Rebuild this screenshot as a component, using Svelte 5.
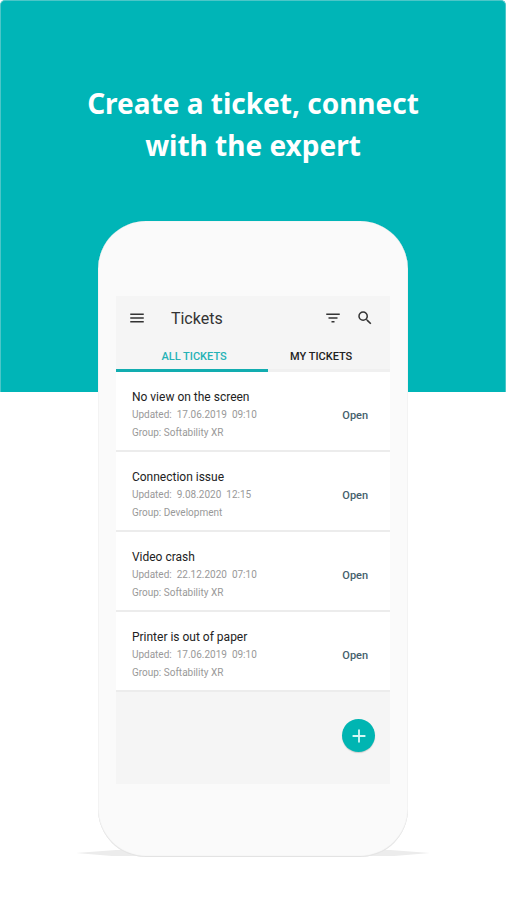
<script>
  const tickets = [
    { title: "No view on the screen", date: "17.06.2019", time: "09:10", group: "Softability XR" },
    { title: "Connection issue", date: "9.08.2020", time: "12:15", group: "Development" },
    { title: "Video crash", date: "22.12.2020", time: "07:10", group: "Softability XR" },
    { title: "Printer is out of paper", date: "17.06.2019", time: "09:10", group: "Softability XR" },
  ];
</script>

<main>
  <header class="hero">
    <h1>Create a ticket, connect<br />with the expert</h1>
  </header>

  <div class="stage">
    <svg class="shadow" viewBox="0 0 354 8" preserveAspectRatio="none" aria-hidden="true">
      <path d="M0 4 L40 1 H314 L354 4 L318 7 H36 Z" fill="#ececec" />
    </svg>
    <div class="phone">
      <div class="screen">
        <div class="bar">
          <button class="icon" aria-label="Menu">
            <svg viewBox="0 0 24 24"><path d="M3 18h18v-2H3v2zm0-5h18v-2H3v2zm0-7v2h18V6H3z" /></svg>
          </button>
          <h2>Tickets</h2>
          <button class="icon" aria-label="Filter">
            <svg viewBox="0 0 24 24"><path d="M10 18h4v-2h-4v2zM3 6v2h18V6H3zm3 7h12v-2H6v2z" /></svg>
          </button>
          <button class="icon" aria-label="Search">
            <svg viewBox="0 0 24 24">
              <path
                d="M15.5 14h-.79l-.28-.27A6.471 6.471 0 0 0 16 9.5 6.5 6.5 0 1 0 9.5 16c1.61 0 3.09-.59 4.23-1.57l.27.28v.79l5 4.99L20.49 19l-4.99-5zm-6 0C7.01 14 5 11.99 5 9.5S7.01 5 9.5 5 14 7.01 14 9.5 11.99 14 9.5 14z"
              />
            </svg>
          </button>
        </div>

        <nav class="tabs">
          <button class="tab active">ALL TICKETS</button>
          <button class="tab">MY TICKETS</button>
        </nav>

        <ul>
          {#each tickets as ticket}
            <li>
              <div class="info">
                <h3>{ticket.title}</h3>
                <p>Updated:&nbsp; {ticket.date}&nbsp; {ticket.time}</p>
                <p>Group: {ticket.group}</p>
              </div>
              <span class="status">Open</span>
            </li>
          {/each}
        </ul>

        <div class="actions">
          <button class="add" aria-label="Create ticket">
            <svg viewBox="0 0 24 24"><path d="M19 13h-6v6h-2v-6H5v-2h6V5h2v6h6v2z" /></svg>
          </button>
        </div>
      </div>
    </div>
  </div>
</main>

<style>
  :global(body) {
    margin: 0;
    background: #fff;
  }

  main {
    font-family: Roboto, "Liberation Sans", sans-serif;
    color: #333;
  }

  h1,
  h2,
  h3,
  p,
  ul {
    margin: 0;
    padding: 0;
    font-weight: 400;
  }

  button {
    padding: 0;
    border: 0;
    background: none;
    font-family: inherit;
  }

  svg {
    display: block;
    fill: currentColor;
  }

  .hero {
    box-sizing: border-box;
    min-height: 392px;
    padding-top: 81px;
    border: 1px solid #4cc6c8;
    border-bottom: 0;
    border-radius: 5px 5px 0 0;
    background: #00b5b7;
  }

  h1 {
    color: #fff;
    font: bold 28px/42px "Noto Sans", "Open Sans", sans-serif;
    text-align: center;
  }

  .stage {
    position: relative;
    width: 70%;
    margin: -171px auto 0;
    padding-bottom: 42px;
  }

  .shadow {
    position: absolute;
    bottom: 42px;
    left: 0;
    width: 100%;
    height: 8px;
  }

  .phone {
    position: relative;
    box-sizing: border-box;
    margin: 0 22px;
    padding: 75px 18px 73px;
    border-radius: 48px;
    background: #fafafa;
    box-shadow: inset 0 -1px 1px #e2e2e2, inset 0 0 1px #d8d8d8;
  }

  .screen {
    background: #f5f5f5;
  }

  .bar {
    display: flex;
    align-items: center;
    height: 44px;
    padding: 0 14px 0 12px;
  }

  .icon {
    width: 20px;
    margin-left: 12px;
    color: #333;
  }

  .icon:first-child {
    margin-left: 0;
  }

  .icon svg {
    width: 18px;
    height: 18px;
  }

  h2 {
    flex: 1;
    padding-left: 23px;
    font-size: 16px;
  }

  .tabs {
    display: grid;
    grid-template-columns: 5fr 4fr;
  }

  .tab {
    height: 32px;
    padding: 4px 16px 0 0;
    border-bottom: 3px solid #f0f0f0;
    color: #222;
    font-size: 11px;
    font-weight: 500;
  }

  .tab.active {
    padding: 4px 0 0 4px;
    border-color: #12adb0;
    color: #26b2b5;
  }

  ul {
    list-style: none;
  }

  li {
    display: flex;
    align-items: center;
    box-sizing: border-box;
    min-height: 80px;
    padding: 8px 22px 0 16px;
    border-bottom: 2px solid #ececec;
    background: #fff;
  }

  .info {
    flex: 1;
  }

  h3 {
    color: #222;
    font-size: 12px;
    line-height: 18px;
  }

  p {
    color: #999;
    font-size: 10px;
    line-height: 18px;
  }

  .status {
    color: #45606c;
    font-size: 11px;
    font-weight: 500;
  }

  .actions {
    display: flex;
    justify-content: flex-end;
    padding: 27px 15px 32px;
  }

  .add {
    display: grid;
    place-items: center;
    width: 33px;
    height: 33px;
    border-radius: 50%;
    background: #00b5b2;
    box-shadow: 0 1px 1px #ccc;
    color: #d5f7f5;
  }

  .add svg {
    width: 22px;
    height: 22px;
  }
</style>
